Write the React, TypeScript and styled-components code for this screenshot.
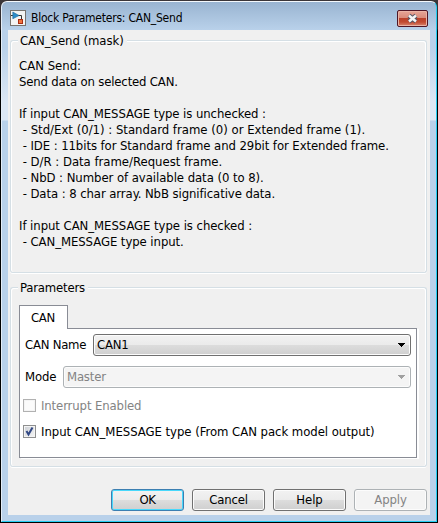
import React from "react";
import styled, { createGlobalStyle } from "styled-components";

const Global = createGlobalStyle`
  * { box-sizing: border-box; }
  body { margin: 0; background: #000; }
`;

const Frame = styled.div`
  width: 438px;
  height: 523px;
  padding: 1px;
  background: linear-gradient(#3b3639 0, #2b2729 29px, #000 31px);
  font: 13px/16px "DejaVu Sans Condensed", "DejaVu Sans", sans-serif;
  font-stretch: condensed;
  color: #000;
`;

const Shell = styled.div`
  display: flex;
  flex-direction: column;
  width: 436px;
  height: 521px;
  border: 1px solid #25cdf2;
  border-top-color: #f4f8fc;
  border-left-color: #e4edf7;
  border-radius: 6px 6px 0 0;
  padding: 0 6px 6px;
  background: linear-gradient(#99b4d1 0, #b9d1ea 28px, #b9d1ea 45px, #dce7f4 100px, #dce7f4 118px, #b9d1ea 119px);
`;

const TitleBar = styled.header`
  display: flex;
  flex: none;
  height: 28px;
  padding: 8px 2px 0;
`;

const Title = styled.span`
  flex: 1;
  margin-left: 5px;
  font-size: 12px;
  line-height: 17px;
  letter-spacing: -0.22px;
  white-space: nowrap;
`;

const CloseButton = styled.button`
  width: 31px;
  height: 17px;
  padding: 0;
  border: 1px solid #4f1626;
  border-radius: 2px;
  background: linear-gradient(#e6a597 0, #d98b7a 7px, #b9402a 7px, #c24a30 11px, #d98670 100%);
  box-shadow: inset 0 0 0 1px #eab3a5;
  svg { display: block; margin: 0 auto; }
`;

const Client = styled.main`
  flex: 1;
  padding: 3px 3px 0 2px;
  background: #f0f0f0;
`;

const Group = styled.section<{ $height: number }>`
  display: flex;
  flex-direction: column;
  height: ${(p) => p.$height}px;
  margin-bottom: 7px;
`;

const Legend = styled.div`
  display: flex;
  flex: none;
  height: 17px;
  &::before, &::after {
    content: "";
    height: 10px;
    margin-top: 7px;
    border-top: 1px solid #d5dfe5;
    box-shadow: inset 0 1px #fff;
  }
  &::before {
    width: 7px;
    border-left: 1px solid #d5dfe5;
    border-radius: 3px 0 0 0;
    box-shadow: inset 1px 1px #fff;
  }
  &::after {
    flex: 1;
    border-right: 1px solid #d5dfe5;
    border-radius: 0 3px 0 0;
    box-shadow: inset -1px 1px #fff;
  }
`;

const LegendText = styled.span<{ $track: number }>`
  padding: 0 3px 0 2px;
  letter-spacing: ${(p) => p.$track}px;
  white-space: nowrap;
`;

const GroupBody = styled.div`
  flex: 1;
  padding: 8px 9px 0 8px;
  border: 1px solid #d5dfe5;
  border-top: 0;
  border-radius: 0 0 3px 3px;
  box-shadow: inset 1px 0 #fff, inset -1px 0 #fff, 0 1px #fff;
`;

const Line = styled.div<{ $track: number }>`
  height: 16px;
  letter-spacing: ${(p) => p.$track}px;
  white-space: pre;
`;

const Tab = styled.div`
  width: 49px;
  height: 24px;
  margin-bottom: -1px;
  padding: 4px 0 0 11px;
  position: relative;
  letter-spacing: -0.3px;
  border: 1px solid #898c95;
  border-bottom: 0;
  background: #fff;
`;

const Panel = styled.div`
  height: 130px;
  width: 398px;
  padding: 5px 5px 0 3px;
  border: 1px solid #898c95;
  background: #fff;
  box-shadow: 2px 1px #fff;
`;

const Field = styled.label`
  display: flex;
  align-items: center;
  height: 22px;
  margin-bottom: 10px;
  padding-left: 2px;
`;

const Label = styled.span<{ $width?: number; $track: number }>`
  flex: none;
  width: ${(p) => (p.$width ? `${p.$width}px` : "auto")};
  letter-spacing: ${(p) => p.$track}px;
  white-space: nowrap;
`;

const Combo = styled.span<{ $disabled?: boolean }>`
  display: flex;
  flex: 1;
  align-items: center;
  justify-content: space-between;
  height: 22px;
  padding: 0 5px 0 3px;
  letter-spacing: -0.2px;
  border: 1px solid ${(p) => (p.$disabled ? "#adb2b5" : "#707070")};
  border-radius: 3px;
  color: ${(p) => (p.$disabled ? "#838383" : "#000")};
  background: ${(p) => (p.$disabled ? "#f4f4f4" : "linear-gradient(#f2f2f2 0, #ebebeb 50%, #dddddd 50%, #cfcfcf 100%)")};
  box-shadow: inset 0 0 0 1px #fcfcfc;
`;

const CheckRow = styled.label<{ $disabled?: boolean }>`
  display: flex;
  align-items: center;
  height: 15px;
  margin-bottom: 11px;
  gap: 5px;
  color: ${(p) => (p.$disabled ? "#838383" : "#000")};
`;

const Box = styled.span<{ $disabled?: boolean }>`
  width: 13px;
  height: 13px;
  border: 1px solid ${(p) => (p.$disabled ? "#b1b1b1" : "#8e8f8f")};
  background: ${(p) => (p.$disabled ? "#fbfbfb" : "linear-gradient(135deg, #cbcfd5, #f6f6f6)")};
  box-shadow: inset 0 0 0 1px #f4f4f4;
  svg { display: block; }
`;

const Buttons = styled.footer`
  display: flex;
  justify-content: flex-end;
  gap: 8px;
  margin-top: 22px;
`;

const Button = styled.button<{ $kind?: "default" | "disabled"; $track: number }>`
  width: 73px;
  height: 22px;
  padding: 0;
  font: inherit;
  font-stretch: condensed;
  letter-spacing: ${(p) => p.$track}px;
  border: 1px solid ${(p) => (p.$kind === "default" ? "#3c7fb1" : p.$kind ? "#adb2b5" : "#707070")};
  border-radius: 3px;
  color: ${(p) => (p.$kind === "disabled" ? "#838383" : "#000")};
  background: ${(p) => (p.$kind === "disabled" ? "#f4f4f4" : "linear-gradient(#f2f2f2 0, #ebebeb 50%, #dddddd 50%, #cfcfcf 100%)")};
  box-shadow: inset 0 0 0 1px ${(p) => (p.$kind === "default" ? "#48d8fb" : "#fcfcfc")};
`;

const Arrow = ({ color }: { color: string }) => (
  <svg width="7" height="4" shapeRendering="crispEdges">
    <path d="M0 0H7V1H6V2H5V3H4V4H3V3H2V2H1V1H0Z" fill={color} />
  </svg>
);

const BlockIcon = () => (
  <svg width="16" height="16" viewBox="0 0 16 16">
    <rect x=".5" y=".5" width="15" height="15" fill="#f3f3f3" stroke="#77736f" />
    <path d="M1 5.5H3M8 5.5H11.5V9" fill="none" stroke="#333" />
    <path d="M2.8 2L9 5.5L2.8 8.8Z" fill="#2b8cc9" stroke="#1c6698" strokeWidth=".6" />
    <rect x="8.5" y="9.5" width="4" height="4" fill="#f0733f" stroke="#a92d13" />
  </svg>
);

const description: [string, number][] = [
  ["CAN Send:", 0],
  ["Send data on selected CAN.", -0.17],
  ["", 0],
  ["If input CAN_MESSAGE type is unchecked :", -0.08],
  [" - Std/Ext (0/1) : Standard frame (0) or Extended frame (1).", 0],
  [" - IDE : 11bits for Standard frame and 29bit for Extended frame.", -0.08],
  [" - D/R : Data frame/Request frame.", -0.02],
  [" - NbD : Number of available data (0 to 8).", -0.06],
  [" - Data : 8 char array. NbB significative data.", -0.08],
  ["", 0],
  ["If input CAN_MESSAGE type is checked :", -0.06],
  [" - CAN_MESSAGE type input.", -0.07],
];

export default function App() {
  return (
    <>
      <Global />
      <Frame>
        <Shell>
          <TitleBar>
            <BlockIcon />
            <Title>Block Parameters: CAN_Send</Title>
            <CloseButton aria-label="Close">
              <svg width="13" height="11" viewBox="0 0 13 11">
                <path d="M3 2.5L10 8.5M10 2.5L3 8.5" stroke="#535666" strokeWidth="4.5" />
                <path d="M3 2.5L10 8.5M10 2.5L3 8.5" stroke="#f5f5f5" strokeWidth="2.5" />
              </svg>
            </CloseButton>
          </TitleBar>
          <Client>
            <Group $height={240}>
              <Legend><LegendText $track={-0.05}>CAN_Send (mask)</LegendText></Legend>
              <GroupBody>
                {description.map(([text, track], i) => <Line key={i} $track={track}>{text}</Line>)}
              </GroupBody>
            </Group>
            <Group $height={187}>
              <Legend><LegendText $track={-0.2}>Parameters</LegendText></Legend>
              <GroupBody>
                <Tab>CAN</Tab>
                <Panel>
                  <Field>
                    <Label $width={68} $track={-0.25}>CAN Name</Label>
                    <Combo>CAN1<Arrow color="#000" /></Combo>
                  </Field>
                  <Field>
                    <Label $width={38} $track={-0.15}>Mode</Label>
                    <Combo $disabled>Master<Arrow color="#a0a0a0" /></Combo>
                  </Field>
                  <CheckRow $disabled>
                    <Box $disabled />
                    <Label $track={-0.12}>Interrupt Enabled</Label>
                  </CheckRow>
                  <CheckRow>
                    <Box>
                      <svg width="11" height="11"><path d="M2.5 5L4.5 8.5L8.5 1.5" fill="none" stroke="#324884" strokeWidth="2" /></svg>
                    </Box>
                    <Label $track={-0.04}>Input CAN_MESSAGE type (From CAN pack model output)</Label>
                  </CheckRow>
                </Panel>
              </GroupBody>
            </Group>
            <Buttons>
              <Button $kind="default" $track={-0.4}>OK</Button>
              <Button $track={-0.2}>Cancel</Button>
              <Button $track={-0.1}>Help</Button>
              <Button $kind="disabled" $track={-0.1} disabled>Apply</Button>
            </Buttons>
          </Client>
        </Shell>
      </Frame>
    </>
  );
}
